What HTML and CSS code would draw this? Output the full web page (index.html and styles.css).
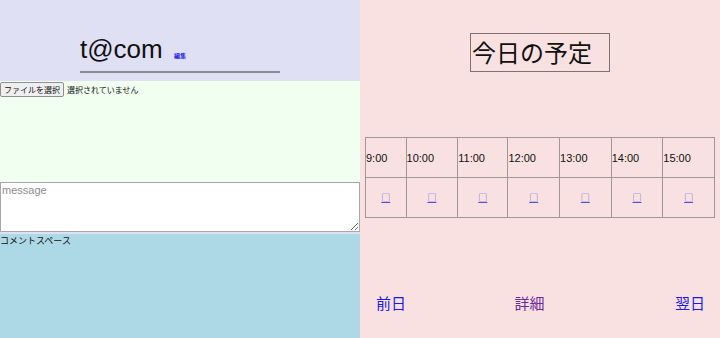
FILE: index.html
```html
<!DOCTYPE html>
<html lang="ja">
<head>
  <meta charset="UTF-8">
  <meta name="viewport" content="width=device-width, initial-scale=1.0">
  <title>マイページ</title>
  <link rel="stylesheet" href="styles.css">
</head>
<body>

    <div class="page">

        <!-- 左側: プロフィール -->
        <div class="left">
            <div class="profile">
                <h1 class="user-name">t@com <a href="#" class="edit-link">編集</a></h1>
            </div>

            <div class="upload">
                <button type="button" class="file-btn">ファイルを選択</button>
                <span class="file-status">選択されていません</span>
            </div>

            <textarea class="message" placeholder="message"></textarea>

            <div class="comments">コメントスペース</div>
        </div>

        <!-- 右側: 予定 -->
        <div class="right">
            <h2 class="today">今日の予定</h2>

            <table class="schedule">
                <tr>
                    <td>9:00</td>
                    <td>10:00</td>
                    <td>11:00</td>
                    <td>12:00</td>
                    <td>13:00</td>
                    <td>14:00</td>
                    <td>15:00</td>
                </tr>
                <tr class="slots">
                    <td><a href="#">□</a></td>
                    <td><a href="#">□</a></td>
                    <td><a href="#">□</a></td>
                    <td><a href="#">□</a></td>
                    <td><a href="#">□</a></td>
                    <td><a href="#">□</a></td>
                    <td><a href="#">□</a></td>
                </tr>
            </table>

            <nav class="day-nav">
                <a href="#">前日</a>
                <a href="#" class="visited">詳細</a>
                <a href="#">翌日</a>
            </nav>
        </div>

    </div>

</body>
</html>
```

FILE: styles.css
```css
body {
  margin: 0;
  font-family: "Liberation Sans", "Noto Sans CJK JP", sans-serif;
}

.page {
  display: flex;
  height: 338px;
  overflow: hidden;
}

/* 左側 */
.left {
  width: 360px;
  background-color: #e0e0f5;
  display: flex;
  flex-direction: column;
}

.profile {
  height: 81px;
  padding-left: 80px;
  box-sizing: border-box;
  padding-top: 34px;
}

.user-name {
  margin: 0;
  width: 200px;
  font-size: 26px;
  font-weight: normal;
  line-height: 30px;
  border-bottom: 2px solid #8a8a96;
  color: #111;
}

.edit-link {
  font-size: 6px;
  color: #2020ee;
  margin-left: 4px;
  text-decoration: none;
  font-weight: bold;
}

.upload {
  height: 101px;
  background-color: #f0fff0;
  font-family: "Noto Sans CJK JP", sans-serif;
  font-size: 8px;
  display: flex;
  align-items: flex-start;
  gap: 3px;
}

.file-btn {
  font-family: "Noto Sans CJK JP", sans-serif;
  font-size: 8px;
  padding: 0 3px;
  height: 15px;
  line-height: 13px;
  margin: 1px 0 0 0;
  border: 1px solid #8f8f8f;
  border-radius: 2px;
  background-color: #efefef;
  color: #111;
}

.file-status {
  line-height: 17px;
  color: #111;
}

.message {
  display: block;
  width: 360px;
  height: 50px;
  box-sizing: border-box;
  margin: 0 0 2px 0;
  padding: 1px;
  border: 1px solid #a9a9a9;
  font-family: "Liberation Sans", sans-serif;
  font-size: 11px;
  resize: vertical;
}

.message::placeholder {
  color: #8c8c8c;
}

.comments {
  flex: 1;
  background-color: #add8e6;
  font-family: "Noto Sans CJK JP", sans-serif;
  font-size: 9px;
  line-height: 14px;
  color: #111;
}

/* 右側 */
.right {
  width: 360px;
  background-color: #f9e1e1;
  display: flex;
  flex-direction: column;
  align-items: center;
}

.today {
  margin: 33px 0 0 0;
  width: 140px;
  height: 39px;
  box-sizing: border-box;
  border: 1px solid #807070;
  font-family: "Noto Sans CJK JP", sans-serif;
  font-size: 24px;
  font-weight: normal;
  line-height: 35px;
  padding-left: 1px;
  color: #111;
}

.schedule {
  margin-top: 65px;
  width: 350px;
  height: 80px;
  border-collapse: collapse;
  border: 1px solid #555;
  font-size: 11px;
  color: #111;
}

.schedule td {
  border: 1px solid #a09898;
  padding: 0;
  height: 39px;
  text-align: left;
}

.slots td {
  text-align: center;
}

.slots a {
  color: #5050e0;
  font-family: "Noto Sans CJK JP", sans-serif;
  font-size: 9px;
}

.day-nav {
  align-self: stretch;
  margin-top: 74px;
  padding: 0 15px 0 16px;
  display: flex;
  justify-content: space-between;
  font-family: "Noto Sans CJK JP", sans-serif;
  font-size: 15px;
}

.day-nav a {
  color: #1a1aee;
  text-decoration: none;
}

.day-nav a.visited {
  color: #6a2aa0;
  margin-right: 22px;
}
```
